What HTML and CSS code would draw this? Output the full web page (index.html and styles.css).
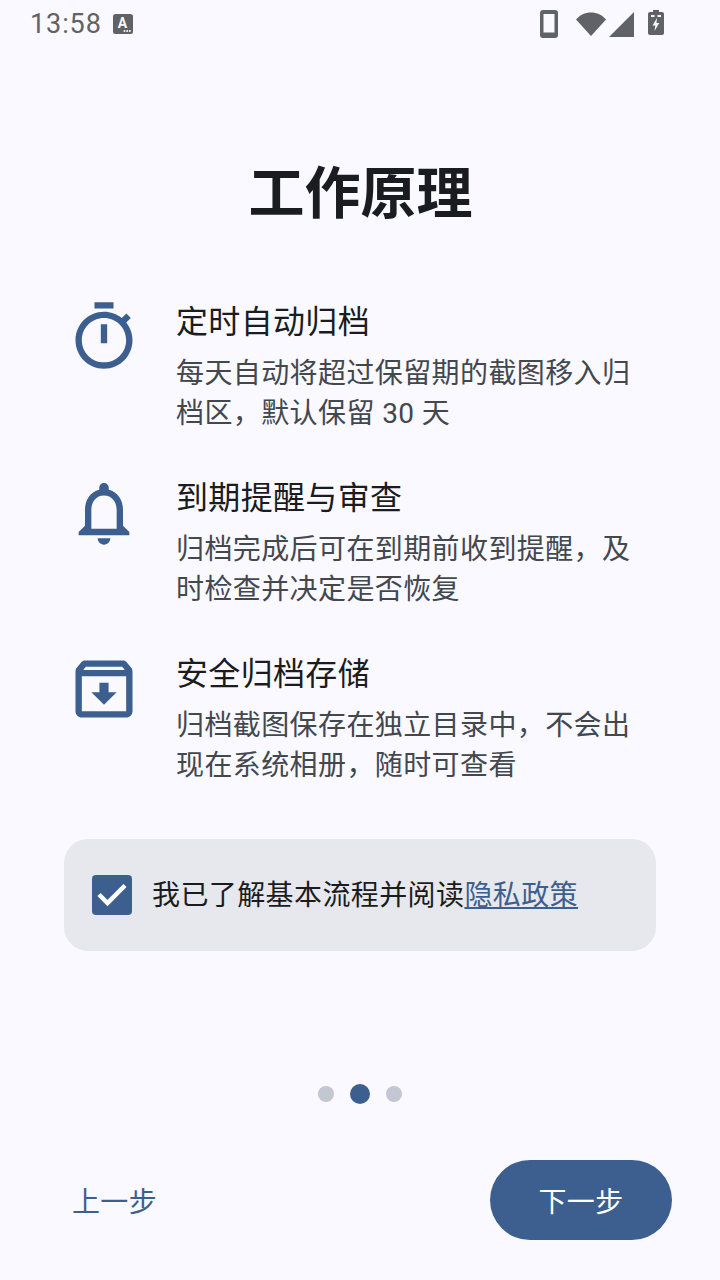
FILE: index.html
```html
<!doctype html>
<html lang="zh-CN">
  <head>
    <meta charset="UTF-8">
    <title>工作原理</title>
    <link rel="stylesheet" href="styles.css">
  </head>
  <body>
    <main class="screen">
      <header class="status-bar">
        <div class="status-left">
          <span class="clock">13:58</span>
          <svg class="status-a" viewBox="0 0 20 20"><rect width="20" height="20" rx="2.5" fill="#606266"/><text x="9.5" y="13.5" text-anchor="middle" class="status-a-letter">A</text><circle cx="11.5" cy="17" r="1" fill="#f9f9ff"/><circle cx="14.2" cy="17" r="1" fill="#f9f9ff"/><circle cx="16.9" cy="17" r="1" fill="#f9f9ff"/></svg>
        </div>
        <div class="status-right">
          <svg class="status-phone" viewBox="0 0 18 28"><path fill="#606266" d="M3 0h12a3 3 0 0 1 3 3v22a3 3 0 0 1-3 3H3a3 3 0 0 1-3-3V3a3 3 0 0 1 3-3zm.5 4v18.5h11V4z"/></svg>
          <svg class="status-wifi" viewBox="0 0 30 24"><path fill="#606266" d="M0 7.500C4 3 9 .5 15 .5s11 2.500 15 7L15 24z"/></svg>
          <svg class="status-signal" viewBox="0 0 25 25"><path fill="#606266" d="M25 0v25H0z"/></svg>
          <svg class="status-battery" viewBox="0 0 16 25"><path fill="#606266" d="M5 0h6v2h3a2 2 0 0 1 2 2v19a2 2 0 0 1-2 2H2a2 2 0 0 1-2-2V4a2 2 0 0 1 2-2h3z"/><path fill="#f9f9ff" d="M3 5h3.500v2H3zM9.500 5H13v2H9.500zM9 8l-4.500 7.500h2.800L6.500 21l4.800-8H8.500z"/></svg>
        </div>
      </header>

      <h1 class="title">工作原理</h1>

      <section class="features">
        <div class="feature">
          <svg class="feature-icon" viewBox="0 0 24 24"><path d="M15 1H9v2h6V1zm-4 13h2V8h-2v6zm8.030-6.610l1.420-1.420c-.43-.51-.9-.99-1.410-1.410l-1.420 1.420C16.070 4.740 14.120 4 12 4c-4.970 0-9 4.030-9 9s4.020 9 9 9 9-4.030 9-9c0-2.120-.74-4.070-1.970-5.610zM12 20c-3.870 0-7-3.130-7-7s3.130-7 7-7 7 3.130 7 7-3.130 7-7 7z"/></svg>
          <div class="feature-text">
            <h2>定时自动归档</h2>
            <p>每天自动将超过保留期的截图移入归档区，默认保留 30 天</p>
          </div>
        </div>
        <div class="feature">
          <svg class="feature-icon" viewBox="0 0 24 24"><path d="M12 22c1.100 0 2-.9 2-2h-4c0 1.100.9 2 2 2zm6-6v-5c0-3.070-1.630-5.640-4.500-6.320V4c0-.83-.67-1.500-1.500-1.500s-1.500.67-1.500 1.500v.68C7.640 5.360 6 7.920 6 11v5l-2 2v1h16v-1l-2-2zm-2 1H8v-6c0-2.480 1.510-4.500 4-4.500s4 2.020 4 4.500v6z"/></svg>
          <div class="feature-text">
            <h2>到期提醒与审查</h2>
            <p>归档完成后可在到期前收到提醒，及时检查并决定是否恢复</p>
          </div>
        </div>
        <div class="feature">
          <svg class="feature-icon" viewBox="0 0 24 24"><path d="M20.540 5.230l-1.390-1.680C18.880 3.210 18.470 3 18 3H6c-.47 0-.88.21-1.160.55L3.460 5.230C3.170 5.570 3 6.020 3 6.500V19c0 1.100.9 2 2 2h14c1.100 0 2-.9 2-2V6.500c0-.48-.17-.93-.46-1.270zM6.240 5h11.520l.81.97H5.440l.8-.97zM5 19V8h14v11H5zm8.450-9h-2.900v3H8l4 4 4-4h-2.550z"/></svg>
          <div class="feature-text">
            <h2>安全归档存储</h2>
            <p>归档截图保存在独立目录中，不会出现在系统相册，随时可查看</p>
          </div>
        </div>
      </section>

      <label class="consent">
        <span class="checkbox">
          <svg viewBox="0 0 40 40"><path d="M7 19.500l8.500 8.500L33 10.500"/></svg>
        </span>
        <span class="consent-text">我已了解基本流程并阅读<a class="link">隐私政策</a></span>
      </label>

      <div class="pager">
        <span class="dot"></span>
        <span class="dot dot-active"></span>
        <span class="dot"></span>
      </div>

      <footer class="actions">
        <button class="btn-back">上一步</button>
        <button class="btn-next">下一步</button>
      </footer>
    </main>
  </body>
</html>
```

FILE: styles.css
```css
* {
    box-sizing: border-box;
}

html, body {
    margin: 0;
    height: 100%;
}

body {
    background: #f9f9ff;
    color: #1a1c20;
    font-family: Roboto, "Noto Sans CJK SC", sans-serif;
}

.screen {
    display: flex;
    flex-direction: column;
    height: 1280px;
    overflow: hidden;
}

.status-bar {
    align-items: center;
    display: flex;
    height: 48px;
    justify-content: space-between;
    padding: 0 56px 0 30px;
}

.status-left, .status-right {
    align-items: center;
    display: flex;
}

.clock {
    color: #606266;
    font-size: 27px;
    letter-spacing: 0.9px;
    margin-right: 11px;
}

.status-a {
    height: 20px;
    width: 20px;
}

.status-a-letter {
    fill: #f9f9ff;
    font-family: Roboto, sans-serif;
    font-size: 14px;
    font-weight: 700;
}

.status-phone {
    height: 28px;
    width: 18px;
}

.status-wifi {
    height: 24px;
    margin-bottom: 1px;
    margin-left: 18px;
    width: 30px;
}

.status-signal {
    height: 25px;
    margin-left: 3px;
    width: 25px;
}

.status-battery {
    height: 25px;
    margin-bottom: 3px;
    margin-left: 14px;
    width: 16px;
}

.title {
    font-size: 56px;
    font-weight: 700;
    line-height: 72px;
    margin: 110px 0 0;
    padding-left: 1px;
    text-align: center;
}

.features {
    display: flex;
    flex-direction: column;
    gap: 42px;
    margin-top: 70px;
    padding: 0 64px;
}

.feature {
    align-items: flex-start;
    display: flex;
}

.feature-icon {
    fill: #3d5f8f;
    flex-shrink: 0;
    height: 76px;
    margin: -1px 34px 0 2px;
    width: 76px;
}

.feature-text {
    flex: 1;
}

.feature-text h2 {
    font-size: 32px;
    font-weight: 400;
    letter-spacing: 0.33px;
    line-height: 44px;
    margin: 0 0 10px;
}

.feature-text p {
    color: #43474e;
    font-size: 28px;
    letter-spacing: 0.4px;
    line-height: 40px;
    margin: 0;
}

.consent {
    align-items: center;
    background: #e6e8ed;
    border-radius: 24px;
    display: flex;
    height: 112px;
    margin: 53px 64px 0;
    padding: 0 28px;
}

.checkbox {
    background: #3d5f8f;
    border-radius: 4px;
    display: block;
    height: 40px;
    margin-right: 20px;
    width: 40px;
}

.checkbox svg {
    display: block;
    fill: none;
    stroke: #fff;
    stroke-width: 4.5px;
}

.consent-text {
    font-size: 28px;
    letter-spacing: 0.4px;
    margin-bottom: 4px;
}

.link {
    color: #3d5f8f;
    text-decoration: underline;
}

.pager {
    align-items: center;
    display: flex;
    gap: 16px;
    justify-content: center;
    margin-top: 133px;
}

.dot {
    background: #c3c6d3;
    border-radius: 50%;
    height: 16px;
    width: 16px;
}

.dot-active {
    background: #3d5f8f;
    height: 20px;
    width: 20px;
}

.actions {
    align-items: center;
    display: flex;
    justify-content: space-between;
    margin-top: 56px;
    padding: 0 48px;
}

.actions button {
    background: none;
    border: 0;
    font-family: inherit;
    font-size: 28px;
    letter-spacing: 0.33px;
}

.actions .btn-back {
    color: #3d5f8f;
    padding: 0 24px;
}

.actions .btn-next {
    background: #3d5f8f;
    border-radius: 40px;
    color: #fff;
    height: 80px;
    width: 182px;
}
```
